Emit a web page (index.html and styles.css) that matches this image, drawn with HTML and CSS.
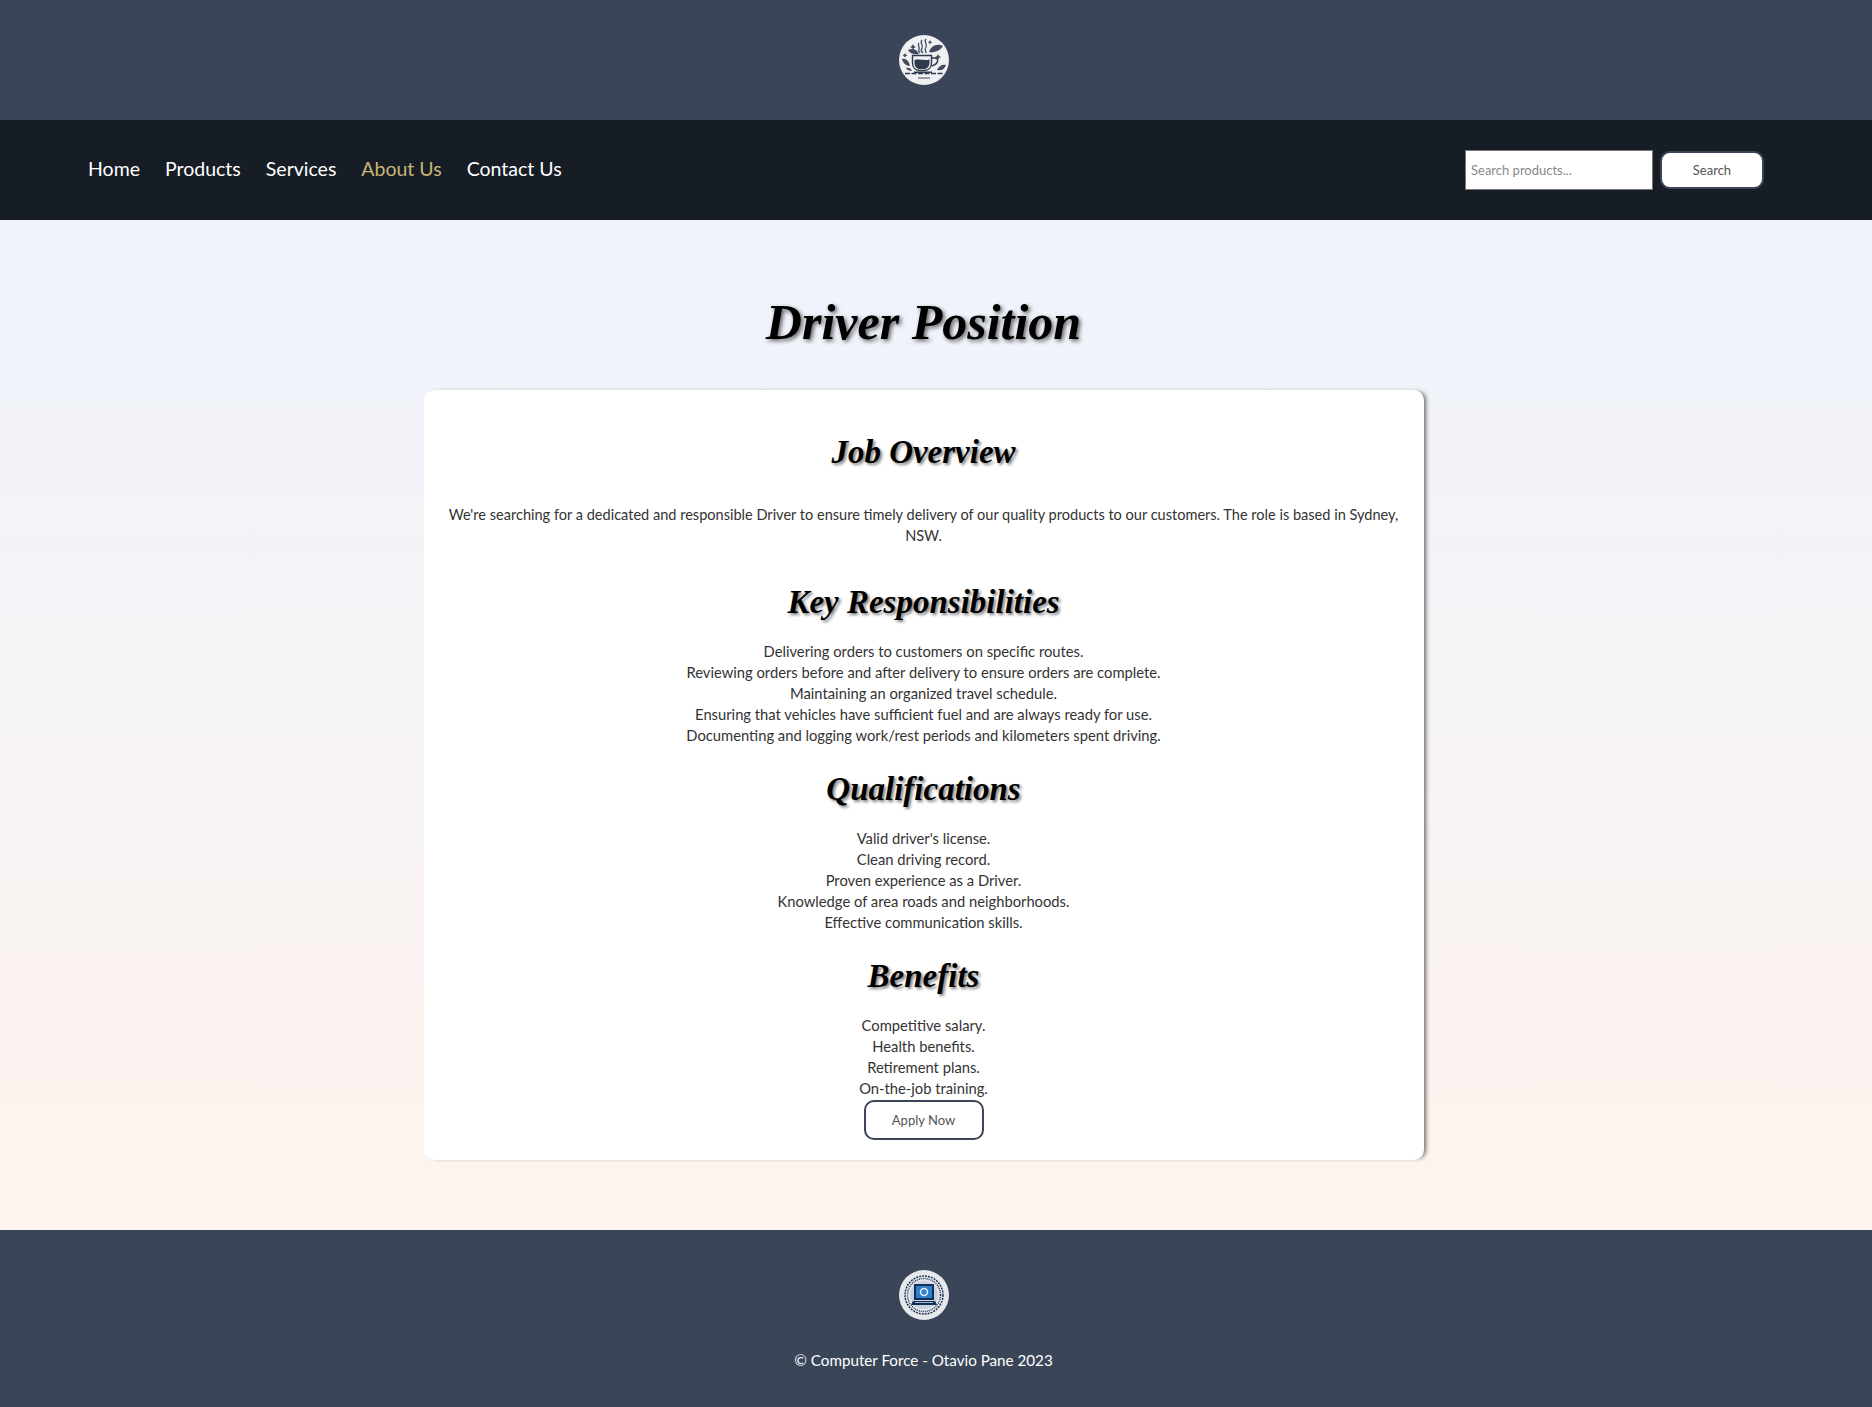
FILE: index.html
```html
<!DOCTYPE html>
<html lang="en">
<head>
    <meta charset="UTF-8">
    <meta name="viewport" content="width=device-width, initial-scale=1.0">
    <title>Driver Position</title>
    <link rel="stylesheet" href="styles.css">
</head>
<body>
<header class="top">
    <svg class="logo" viewBox="0 0 50 50">
        <circle cx="25" cy="25" r="25" fill="#eff0f2"/>
        <!-- steam -->
        <path d="M23 5c-3 3 2 5 0 8s0 4 1 5M27 4c-3 3 2 5 0 8s0 4 0 6M20 8c-2 2 1 4 0 6s0 3 1 4" fill="none" stroke="#3f4a5c" stroke-width="1.3"/>
        <!-- leaves -->
        <path d="M9 15c4-2 9-1 11 4-4 1-9 0-11-4zM44 11c-6-3-12 0-14 6 5 1 11-1 14-6zM3 24c4-1 7 2 8 7-4 0-7-3-8-7zM7 33c2-1 5 0 6 3-3 0-5-1-6-3zM47 30c-4-1-7 1-9 5 4 1 7 0 9-5z" fill="#3f4a5c"/>
        <path d="M14 9l1 2 2 1-2 1-1 2-1-2-2-1 2-1zM39 19l1 2 2 1-2 1-1 2-1-2-2-1 2-1zM6 18l.8 1.6 1.6.8-1.6.8-.8 1.6-.8-1.6-1.6-.8 1.6-.8zM31 5l.7 1.5 1.5.7-1.5.7-.7 1.5-.7-1.5-1.5-.7 1.5-.7z" fill="#3f4a5c"/>
        <!-- cup -->
        <path d="M13.5 20.500h19v7c0 5-3 8-7 8h-5c-4 0-7-3-7-8z" fill="#eff0f2" stroke="#2f3a4c" stroke-width="1.400"/>
        <path d="M15.500 25c5-1.500 10 1 15-.5v3c0 4-2.500 6.500-5.500 6.500h-4c-3.500 0-5.500-2.500-5.500-6.500z" fill="#2f3a4c"/>
        <path d="M33 23h3c4 0 4 6-3.500 8" fill="none" stroke="#2f3a4c" stroke-width="1.400"/>
        <path d="M15 36.500h18v1.500H15z" fill="#2f3a4c"/>
        <!-- table -->
        <path d="M6 38.500h38" stroke="#2f3a4c" stroke-width="1.600" stroke-dasharray="5 1.500"/>
        <path d="M19 43h12" stroke="#59647a" stroke-width="1.200"/>
    </svg>
</header>
<nav class="navbar">
    <ul class="nav-links">
        <li><a href="#">Home</a></li>
        <li><a href="#">Products</a></li>
        <li><a href="#">Services</a></li>
        <li><a href="#" class="active">About Us</a></li>
        <li><a href="#">Contact Us</a></li>
    </ul>
    <form class="search">
        <input type="text" placeholder="Search products...">
        <button type="button" class="search-btn">Search</button>
    </form>
</nav>
<main class="content">
    <h1>Driver Position</h1>
    <section class="card">
        <h2 class="first">Job Overview</h2>
        <p class="intro">We're searching for a dedicated and responsible Driver to ensure timely delivery of our quality products to our customers. The role is based in Sydney, NSW.</p>
        <h2>Key Responsibilities</h2>
        <ul>
            <li>Delivering orders to customers on specific routes.</li>
            <li>Reviewing orders before and after delivery to ensure orders are complete.</li>
            <li>Maintaining an organized travel schedule.</li>
            <li>Ensuring that vehicles have sufficient fuel and are always ready for use.</li>
            <li>Documenting and logging work/rest periods and kilometers spent driving.</li>
        </ul>
        <h2>Qualifications</h2>
        <ul>
            <li>Valid driver's license.</li>
            <li>Clean driving record.</li>
            <li>Proven experience as a Driver.</li>
            <li>Knowledge of area roads and neighborhoods.</li>
            <li>Effective communication skills.</li>
        </ul>
        <h2>Benefits</h2>
        <ul>
            <li>Competitive salary.</li>
            <li>Health benefits.</li>
            <li>Retirement plans.</li>
            <li>On-the-job training.</li>
        </ul>
        <button type="button" class="apply">Apply Now</button>
    </section>
</main>
<footer class="bottom">
    <svg class="logo" viewBox="0 0 50 50">
        <circle cx="25" cy="25" r="25" fill="#e6e8eb"/>
        <!-- circuit ring -->
        <circle cx="25" cy="25" r="19" fill="none" stroke="#1e3557" stroke-width="1.500" stroke-dasharray="2 1"/>
        <circle cx="25" cy="25" r="16.500" fill="none" stroke="#1e3557" stroke-width="1.500" stroke-dasharray="1 1"/>
        <circle cx="25" cy="25" r="14" fill="#c9d3df"/>
        <!-- laptop -->
        <rect x="15" y="14" width="20" height="16" fill="#14305a"/>
        <rect x="17" y="16" width="16" height="12" fill="#2f7fc9"/>
        <circle cx="25" cy="22" r="3.500" fill="none" stroke="#dcecfa" stroke-width="1.600"/>
        <path d="M14 31h22l2 4H12z" fill="#14305a"/>
        <path d="M16 32.500h18" stroke="#c9d3df" stroke-width=".8"/>
    </svg>
    <p>© Computer Force - Otavio Pane 2023</p>
</footer>
</body>
</html>
```

FILE: styles.css
```css
* {
    box-sizing: border-box;
}

body {
    font-family: 'Lato', sans-serif;
    margin: 0;
    padding: 0;
    color: #333;
}

.logo {
    display: block;
    width: 50px;
    height: 50px;
    margin: 0 auto;
}

.top {
    background-color: #3a4658;
    padding: 35px 25px 35px 0;
}

.navbar {
    background-color: #171d25;
    height: 100px;
    display: flex;
    justify-content: space-between;
    align-items: center;
    padding: 0 108px 0 88px;
}

.nav-links {
    display: flex;
    gap: 25px;
    list-style: none;
    margin: 0 0 3px;
    padding: 0;
    font-size: 19.5px;
}

.nav-links a {
    color: #fff;
    text-decoration: none;
}

.nav-links a.active {
    color: #c8b575;
}

.search {
    display: flex;
    align-items: center;
    gap: 7px;
}

.search input {
    width: 188px;
    height: 40px;
    padding: 0 5px;
    border: 1px solid #777;
    background-color: #fff;
    font-family: inherit;
    font-size: 13px;
}

.search input::placeholder {
    color: #888;
}

.search-btn {
    width: 104px;
    height: 38px;
    border: 2px solid #3a4658;
    border-radius: 10px;
    background-color: #fff;
    color: #555;
    font-family: inherit;
    font-size: 13px;
}

.content {
    background: linear-gradient(to bottom, #eef3fc, #fff4ee);
    height: 1010px;
    padding: 67px 25px 0 0;
}

h1, h2 {
    font-family: 'Liberation Serif', serif;
    font-style: italic;
    font-weight: bold;
    color: #000;
    text-align: center;
}

h1 {
    font-size: 50px;
    line-height: 70px;
    margin: 0 0 33px;
    text-shadow: 2px 2px 4px rgba(0, 0, 0, 0.6);
}

.card {
    width: 1000px;
    height: 770px;
    margin: 0 auto;
    padding: 42px 20px 0;
    background-color: #fff;
    border-radius: 10px;
    box-shadow: 4px 0 4px -2px rgba(0, 0, 0, 0.55);
    text-align: center;
    font-size: 14.75px;
    line-height: 21px;
}

.card h2 {
    font-size: 33px;
    line-height: 40px;
    margin: 0 0 19px;
    text-shadow: 2px 2px 3px rgba(0, 0, 0, 0.5);
}

.card h2.first {
    margin-bottom: 32px;
}

.intro {
    margin: 0 0 36px;
    font-size: 14.55px;
}

.card ul {
    list-style: none;
    margin: 0 0 23px;
    padding: 0;
}

.card ul:last-of-type {
    margin-bottom: 0;
}

.apply {
    display: block;
    width: 120px;
    height: 40px;
    margin: 1px auto 0;
    border: 2px solid #3a4658;
    border-radius: 10px;
    background-color: #fff;
    color: #555;
    font-family: inherit;
    font-size: 13px;
}

.bottom {
    background-color: #3a4658;
    height: 177px;
    padding: 40px 25px 0 0;
    text-align: center;
    color: #fff;
}

.bottom p {
    margin: 28px 0 0;
    font-size: 15.2px;
    line-height: 24px;
}
```
